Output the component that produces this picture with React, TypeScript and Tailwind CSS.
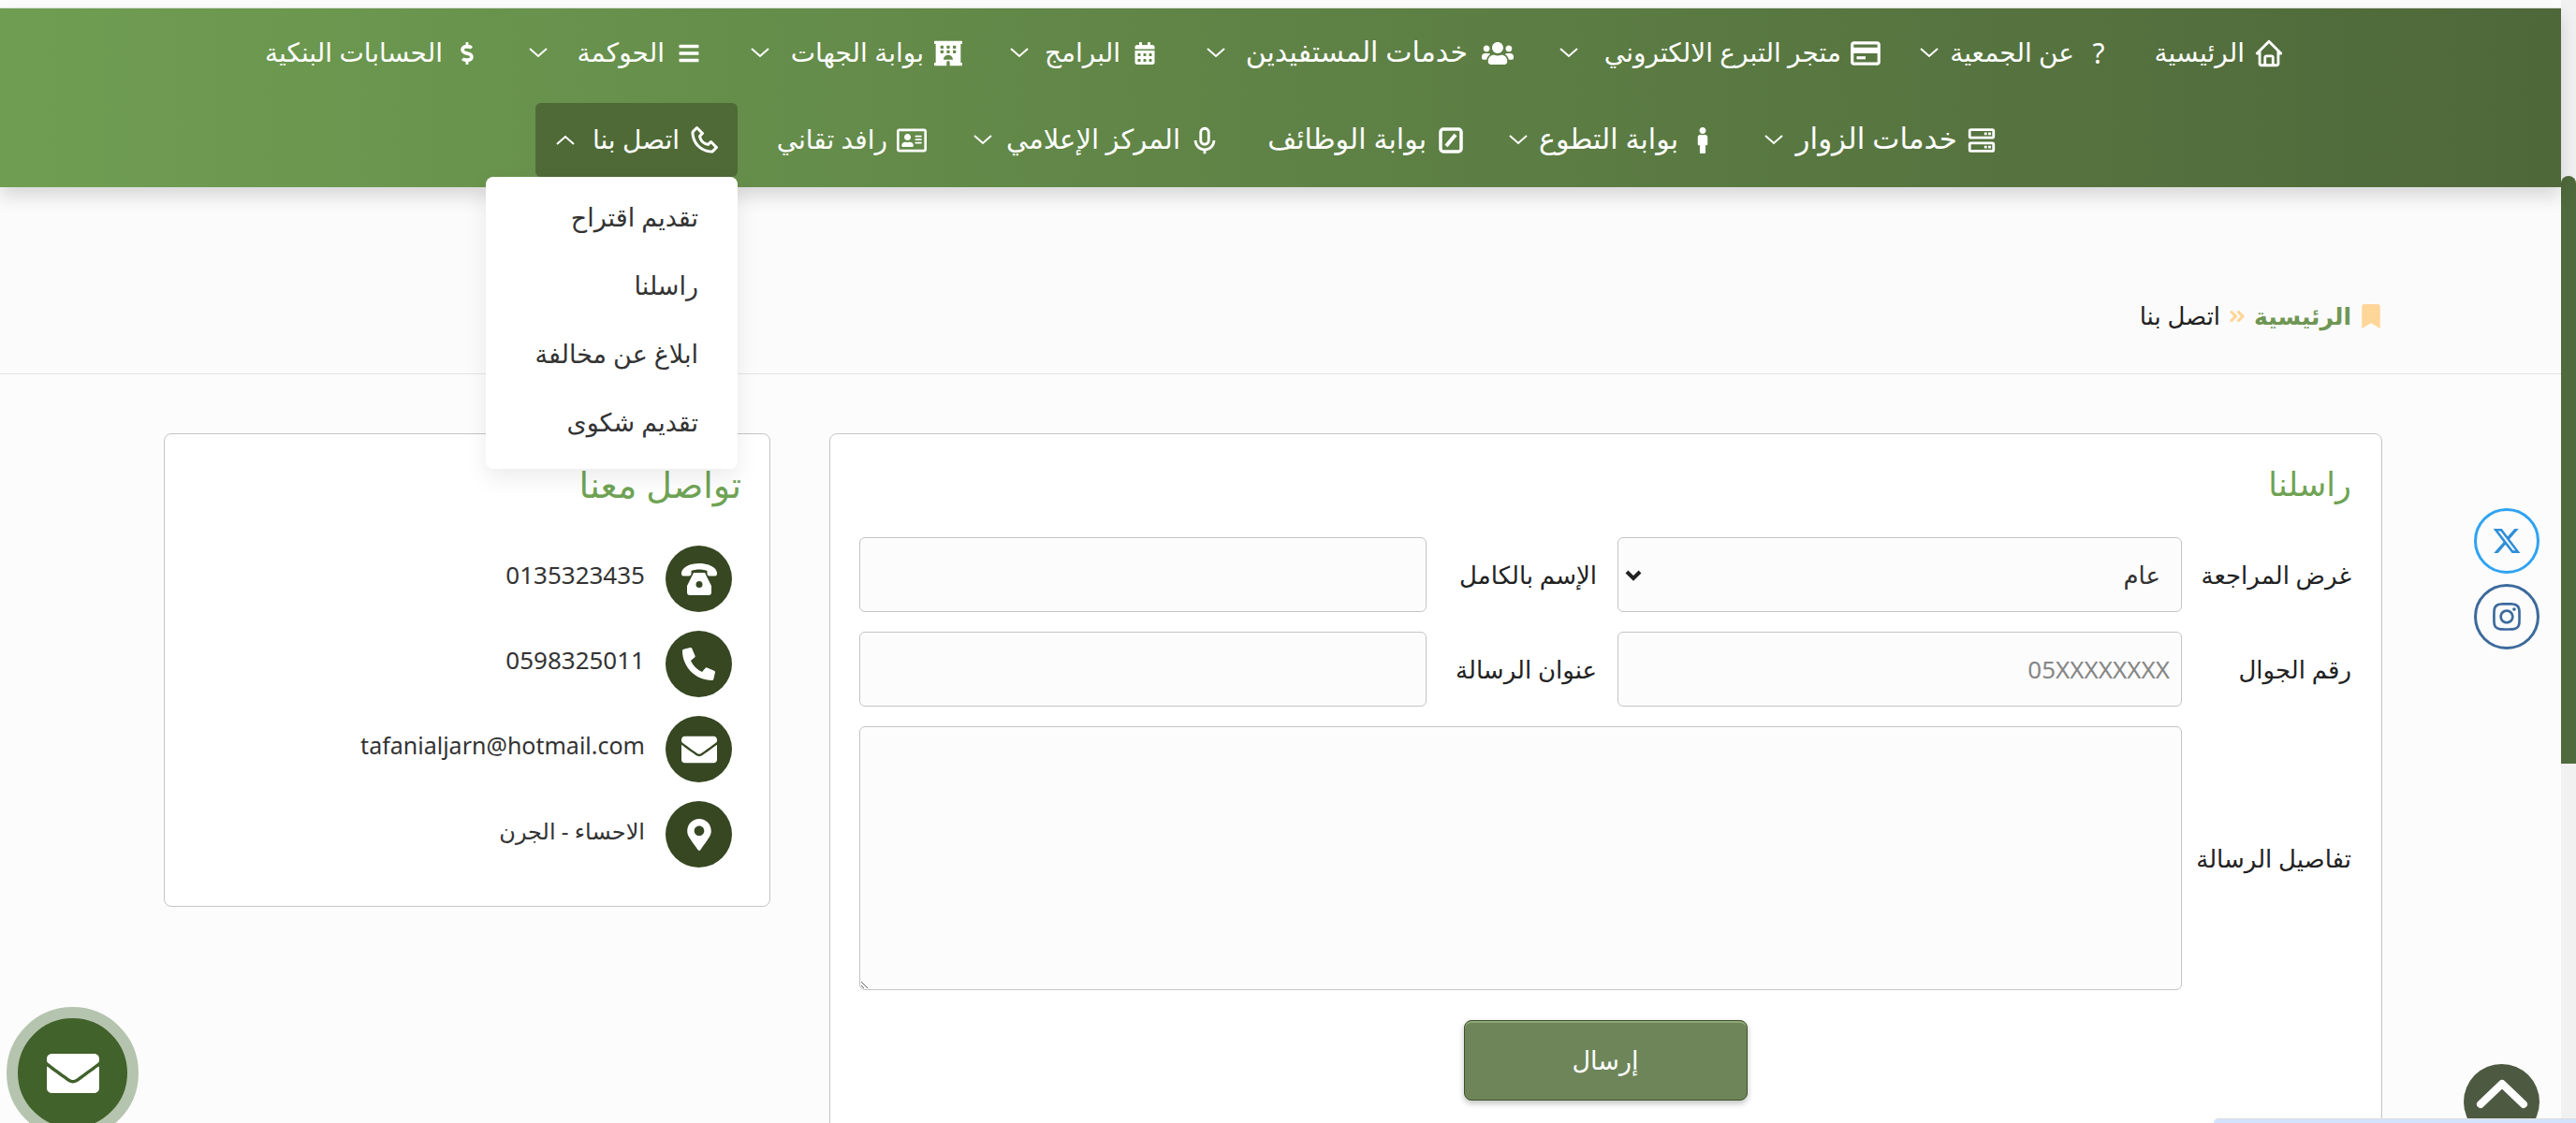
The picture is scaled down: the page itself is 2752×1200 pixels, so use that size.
import { type ReactNode } from 'react';
import { BiHome, BiCreditCard, BiServer, BiMicrophone, BiPhone } from 'react-icons/bi';
import {
  FaUsers, FaCalendarAlt, FaBars, FaDollarSign, FaMale, FaRegAddressCard, FaPhoneAlt,
  FaEnvelope, FaMapMarkerAlt, FaBookmark, FaAngleDoubleRight, FaInstagram, FaHotel,
} from 'react-icons/fa';
import { FaXTwitter } from 'react-icons/fa6';

function Chevron({ up = false }: { up?: boolean }) {
  return (
    <svg width="20" height="11" viewBox="0 0 20 11" fill="none" stroke="currentColor" strokeWidth="2" className="shrink-0">
      <polyline points={up ? '1,10 10,2 19,10' : '1,1 10,9 19,1'} />
    </svg>
  );
}

function PenSquare() {
  return (
    <svg width="26" height="28" viewBox="0 0 26 28" fill="none" stroke="currentColor">
      <rect x="2" y="2" width="22" height="24" rx="3" strokeWidth="3.500" />
      <path d="M8 20 L18 8" strokeWidth="4" />
    </svg>
  );
}

function NavItem({ icon, label, width, textClass = 'text-[28px]', chevron = true, active = false }: { icon: ReactNode; label: string; width: string; textClass?: string; chevron?: boolean; active?: boolean }) {
  return (
    <a className={`flex h-[79px] shrink-0 items-center gap-3 rounded-md text-white ${width} ${active ? 'bg-[#4f6a37] pl-[22px] pr-[22px]' : 'px-[26px]'}`}>
      <span className="flex w-7 shrink-0 items-center justify-center [&>svg]:shrink-0">{icon}</span>
      <span className={`-mt-1 whitespace-nowrap ${textClass}`}>{label}</span>
      {chevron && <span className="mr-auto flex"><Chevron up={active} /></span>}
    </a>
  );
}

function RotaryPhone() {
  return (
    <svg width="40" height="40" viewBox="0 0 40 40" fill="currentColor">
      <path d="M20 3C10 3 2 7 1 13c-.3 2 .5 3.5 2 3.5h6c1.500 0 2.500-1 2.500-2.500V11c5-2 12-2 17 0v3c0 1.500 1 2.500 2.500 2.500h6c1.500 0 2.300-1.500 2-3.500C38 7 30 3 20 3z" />
      <path fillRule="evenodd" d="M14 13h12l7 14v7c0 2-1 3-3 3H10c-2 0-3-1-3-3v-7zM20 22a3.500 3.500 0 1 0 0 7 3.500 3.500 0 0 0 0-7z" />
    </svg>
  );
}

const contacts = [
  { text: '0135323435', size: 'text-[26px]', icon: <RotaryPhone /> },
  { text: '0598325011', size: 'text-[26px]', icon: <FaPhoneAlt size={35} /> },
  { text: 'tafanialjarn@hotmail.com', size: 'text-[25px]', icon: <FaEnvelope size={38} /> },
  { text: 'الاحساء - الجرن', size: 'text-[24px] text-[#111111]', icon: <FaMapMarkerAlt size={34} /> },
];

const fieldClass = 'h-20 rounded-md border border-[#c4c4c4] bg-[#fcfcfc] text-[26px] text-[#333333] outline-none';
const labelClass = 'whitespace-nowrap text-[26px] text-[#222222]';

export default function App() {
  return (
    <div dir="rtl" className="relative flex h-[1200px] w-full overflow-hidden bg-[#fcfcfc] font-['Noto_Sans','DejaVu_Sans',sans-serif]">
      {/* Scrollbar */}
      <div className="order-first h-full w-4 shrink-0 bg-[#f1f1f1] pt-[188px]">
        <div className="h-[628px] w-full rounded-t-lg bg-[#4f6a3c]" />
      </div>

      <div className="flex min-w-0 flex-1 flex-col">
        {/* Header */}
        <div className="relative z-10 mt-2 h-48 shrink-0 border-t border-[#e0e0e0] bg-gradient-to-l from-[#4f683a] to-[#6f9e52] pt-2 shadow-[0_10px_18px_rgba(0,0,0,0.14)]">
          <nav className="flex pr-[272px]">
            <NavItem width="w-[182px]" chevron={false} icon={<BiHome size={34} />} label="الرئيسية" />
            <NavItem width="w-[249px]" icon={<span className="text-[30px] leading-none">?</span>} label="عن الجمعية" />
            <NavItem width="w-[393px]" icon={<BiCreditCard size={38} />} label="متجر التبرع الالكتروني" />
            <NavItem width="w-[377px]" textClass="mr-[6px] text-[30px]" icon={<FaUsers size={34} />} label="خدمات المستفيدين" />
            <NavItem width="w-[210px]" icon={<FaCalendarAlt size={24} />} label="البرامج" />
            <NavItem width="w-[277px]" icon={<FaHotel size={30} />} label="بوابة الجهات" />
            <NavItem width="w-[237px]" icon={<FaBars size={24} />} label="الحوكمة" />
            <NavItem width="w-[287px]" chevron={false} icon={<FaDollarSign size={24} />} label="الحسابات البنكية" />
          </nav>
          <nav className="mt-[14px] flex pr-[579px]">
            <NavItem width="w-[298px]" textClass="text-[31px]" icon={<BiServer size={34} />} label="خدمات الزوار" />
            <NavItem width="w-[269px]" textClass="text-[30px]" icon={<FaMale size={28} />} label="بوابة التطوع" />
            <NavItem width="w-[263px]" textClass="text-[30px]" chevron={false} icon={<PenSquare />} label="بوابة الوظائف" />
            <NavItem width="w-[313px]" textClass="text-[29px]" icon={<BiMicrophone size={34} />} label="المركز الإعلامي" />
            <NavItem width="w-[226px]" chevron={false} icon={<FaRegAddressCard size={32} />} label="رافد تقاني" />
            <NavItem width="w-[216px]" active icon={<BiPhone size={36} />} label="اتصل بنا" />
          </nav>

          {/* Open dropdown */}
          <ul className="absolute left-[519px] top-[180px] z-20 flex h-[312px] w-[269px] flex-col justify-center gap-[27px] rounded-lg bg-white pb-2 pr-[42px] text-[27px] text-[#333333] shadow-[0_10px_24px_rgba(0,0,0,0.08)]">
            <li className="h-[46px] leading-[46px]">تقديم اقتراح</li>
            <li className="h-[46px] leading-[46px]">راسلنا</li>
            <li className="h-[46px] leading-[46px]">ابلاغ عن مخالفة</li>
            <li className="h-[46px] leading-[46px]">تقديم شكوى</li>
          </ul>
        </div>

        {/* Breadcrumb */}
        <div className="flex h-[200px] shrink-0 items-end border-b border-[#e4e4e4] bg-[#fbfbfb] pb-[42px] pr-[190px]">
          <div className="flex items-center gap-2">
            <FaBookmark size={26} className="text-[#ffd699]" />
            <span className="text-[25px] font-bold text-[#6f9654]">الرئيسية</span>
            <FaAngleDoubleRight size={20} className="text-[#ffd699]" />
            <span className="text-[26px] text-[#222222]">اتصل بنا</span>
          </div>
        </div>

        {/* Cards */}
        <div className="flex items-start gap-[63px] pl-[175px] pr-[191px] pt-[63px]">
          <form className="flex h-[1000px] min-w-0 flex-1 flex-col rounded-lg border border-[#c4c4c4] bg-white pl-[31px] pr-[32px]">
            <h2 className="mt-[30px] h-[46px] text-[35px] leading-[46px] text-[#6fa354]">راسلنا</h2>
            <div className="mt-[34px] flex flex-col gap-[21px]">
              <div className="flex items-center">
                <label className={`w-[181px] shrink-0 ${labelClass}`}>غرض المراجعة</label>
                <div className="relative w-[603px] shrink-0">
                  <select className={`w-full appearance-none pr-[22px] ${fieldClass}`} defaultValue="عام">
                    <option>عام</option>
                  </select>
                  <svg width="18" height="14" viewBox="0 0 18 14" fill="none" stroke="#222222" strokeWidth="4" className="pointer-events-none absolute left-[8px] top-[34px]">
                    <polyline points="2,3 9,10 16,3" />
                  </svg>
                </div>
                <label className={`w-[204px] shrink-0 pr-[22px] ${labelClass}`}>الإسم بالكامل</label>
                <input className={`min-w-0 flex-1 px-3 ${fieldClass}`} />
              </div>
              <div className="flex items-center">
                <label className={`w-[181px] shrink-0 ${labelClass}`}>رقم الجوال</label>
                <input className={`w-[603px] shrink-0 px-3 placeholder:text-[#868686] ${fieldClass}`} placeholder="05XXXXXXXX" />
                <label className={`w-[204px] shrink-0 pr-[22px] ${labelClass}`}>عنوان الرسالة</label>
                <input className={`min-w-0 flex-1 px-3 ${fieldClass}`} />
              </div>
              <div className="flex items-center">
                <label className={`w-[181px] shrink-0 ${labelClass}`}>تفاصيل الرسالة</label>
                <textarea className="h-[282px] min-w-0 flex-1 rounded-md border border-[#c4c4c4] bg-[#fcfcfc] outline-none" />
              </div>
            </div>
            <div className="mt-8 flex justify-center">
              <button type="button" className="h-[86px] w-[303px] rounded-lg border border-[#3f5229] bg-[#6e855a] text-[27px] text-white shadow-[inset_0_2px_0_#8fa878,0_3px_6px_rgba(0,0,0,0.25)]">
                إرسال
              </button>
            </div>
          </form>

          <aside className="h-[506px] w-[648px] shrink-0 rounded-lg border border-[#c4c4c4] bg-white pl-6 pr-[30px]">
            <h2 className="mt-[30px] h-[46px] text-[38px] leading-[46px] text-[#6fa354]">تواصل معنا</h2>
            <ul className="mr-[10px] mt-[43px] flex flex-col gap-5">
              {contacts.map((c) => (
                <li key={c.text} className="flex items-center gap-[22px]">
                  <span className="flex h-[71px] w-[71px] shrink-0 items-center justify-center rounded-full bg-[#364722] text-white">{c.icon}</span>
                  <span className={`-mt-2 text-[#333333] ${c.size}`}>{c.text}</span>
                </li>
              ))}
            </ul>
          </aside>
        </div>
      </div>

      {/* Social buttons */}
      <div className="absolute left-[2643px] top-[543px] z-20 flex flex-col gap-[11px]">
        <a className="flex h-[70px] w-[70px] items-center justify-center rounded-full border-[3px] border-[#2ea3f2] text-[#2f8fd8]"><FaXTwitter size={32} /></a>
        <a className="flex h-[70px] w-[70px] items-center justify-center rounded-full border-[3px] border-[#3c6a9c] text-[#3c6a9c]"><FaInstagram size={34} /></a>
      </div>

      {/* Floating mail */}
      <div className="absolute left-[7px] top-[1076px] z-20 flex h-[141px] w-[141px] items-center justify-center rounded-full border-[12px] border-[#b5c4ae] bg-[#41622b] text-white">
        <FaEnvelope size={56} />
      </div>

      {/* Back to top */}
      <div className="absolute left-[2632px] top-[1137px] z-20 flex h-[81px] w-[81px] justify-center rounded-full bg-[#4d5a41] pt-[14px] text-white">
        <svg width="56" height="34" viewBox="0 0 56 34" fill="none" stroke="currentColor" strokeWidth="8" strokeLinecap="round" strokeLinejoin="round">
          <polyline points="5,29 28,7 51,29" />
        </svg>
      </div>

      {/* Link status bubble */}
      <div className="absolute bottom-0 left-[2365px] right-0 z-30 h-[5px] rounded-tl-md border-t border-[#dddddd] bg-[#d3e3fd]" />
    </div>
  );
}
